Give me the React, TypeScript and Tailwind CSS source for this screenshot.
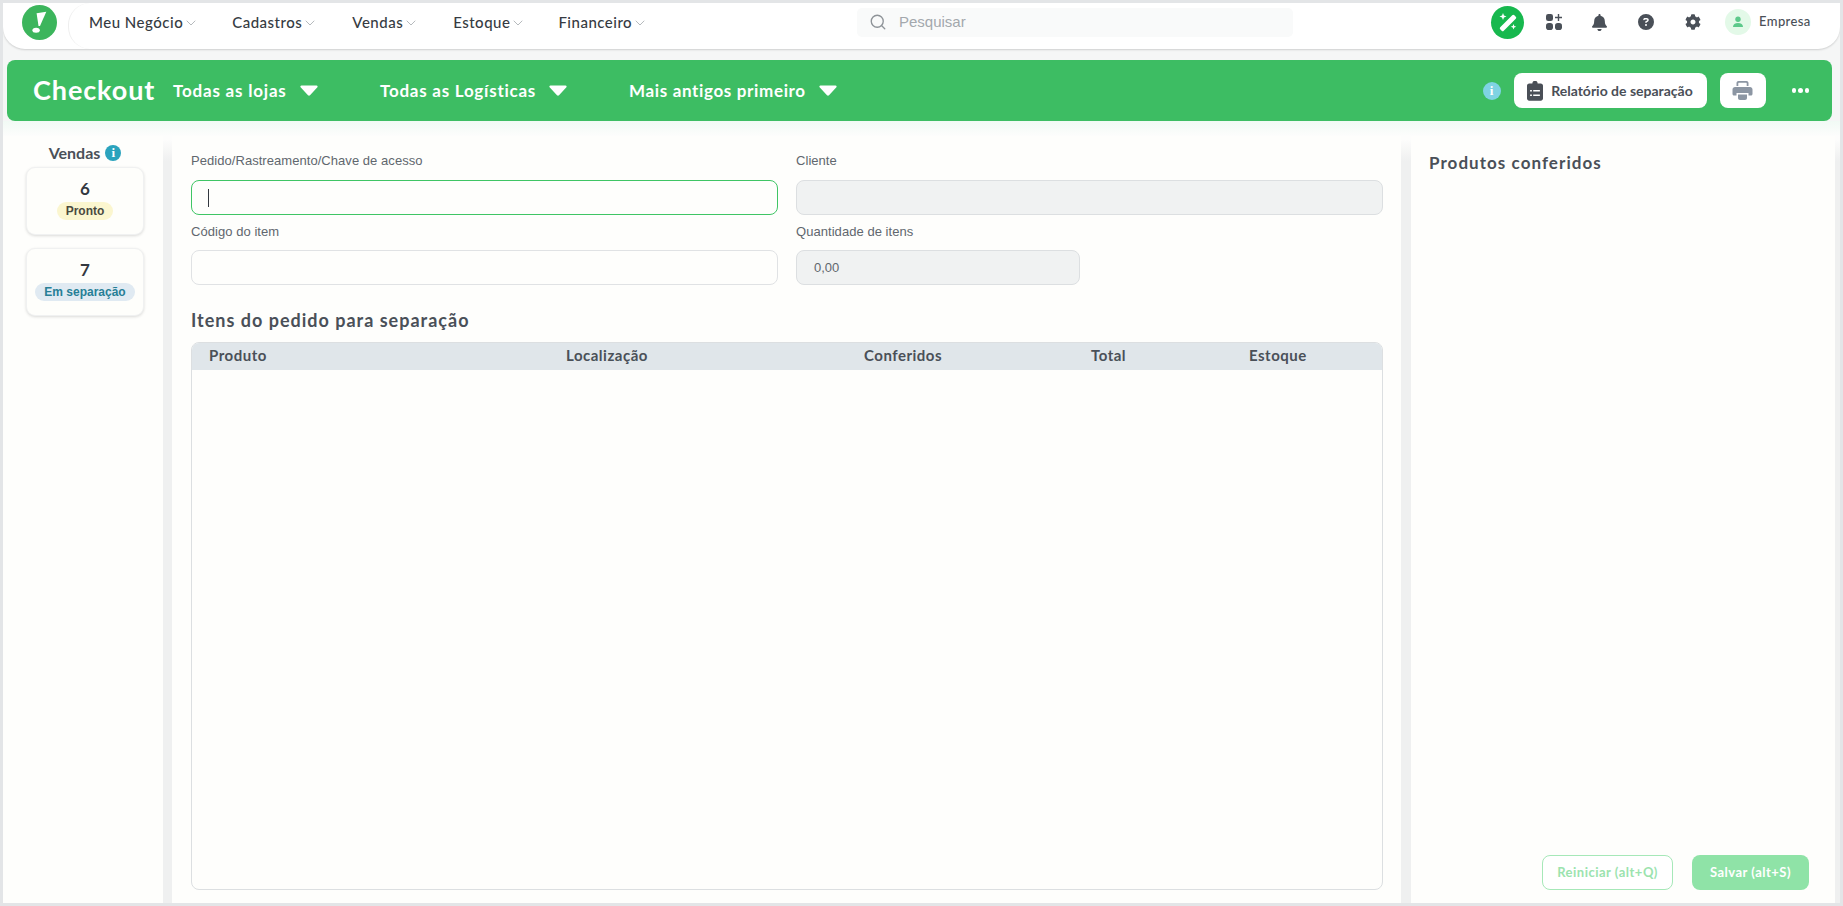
import { ChevronDown, Search } from "lucide-react";
import { FaBell, FaCog } from "react-icons/fa";
import { FaCircleQuestion } from "react-icons/fa6";

const NAV_ITEMS = [
  { label: "Meu Negócio", className: "ml-[20px]" },
  { label: "Cadastros", className: "ml-[33px]" },
  { label: "Vendas", className: "ml-[34px]" },
  { label: "Estoque", className: "ml-[34px]" },
  { label: "Financeiro", className: "ml-[32px]" },
];

const Caret = () => (
  <svg width="20" height="13" viewBox="0 0 20 13" className="shrink-0">
    <path
      d="M2.500 1.500h15c1 0 1.400 1 .9 1.700l-7.400 8c-.5.6-1.500.6-2 0l-7.400-8c-.5-.7-.1-1.700.9-1.700z"
      fill="white"
    />
  </svg>
);

const Logo = () => (
  <svg width="35" height="35" viewBox="0 0 36 36">
    <circle cx="18" cy="18" r="18" fill="#3cb55c" />
    <path d="M15 8.500l10 -1.500 -6.500 14.500 -1.500 .2z" fill="white" />
    <ellipse cx="14.500" cy="26" rx="3.800" ry="2.600" fill="white" />
  </svg>
);

const WandIcon = () => (
  <svg width="22" height="22" viewBox="0 0 22 22" fill="white">
    <rect x="8.500" y="2" width="5" height="20" rx="1.500" transform="rotate(45 11 12)" />
    <path d="M6 2l1 2.500 2.500 1-2.500 1-1 2.500-1-2.500-2.500-1 2.500-1z" />
    <path d="M16.500 13l.8 2 2 .8-2 .8-.8 2-.8-2-2-.8 2-.8z" />
  </svg>
);

const GridIcon = () => (
  <svg width="18" height="18" viewBox="0 0 18 18" fill="#4a5058">
    <rect x="1" y="1" width="7" height="7" rx="2.200" />
    <rect x="1" y="10" width="7" height="7" rx="2.800" />
    <rect x="10" y="10" width="7" height="7" rx="2.800" />
    <path d="M12.800 1h1.400v2.800H17v1.400h-2.800V8h-1.400V5.200H10V3.800h2.800z" />
  </svg>
);

const PersonIcon = () => (
  <svg width="12" height="12" viewBox="0 0 12 12" fill="#5cc98a">
    <circle cx="6" cy="3.200" r="2.700" />
    <path d="M1 11c0-2.600 2-4 5-4s5 1.400 5 4z" />
  </svg>
);

const ClipboardIcon = () => (
  <svg width="16" height="20" viewBox="0 0 18 22">
    <path
      d="M6 2.500a3 3 0 0 1 6 0h3.500c1.400 0 2.500 1.100 2.500 2.500v14.500c0 1.400-1.100 2.500-2.500 2.500h-13C1.100 22 0 20.900 0 19.500V5c0-1.400 1.100-2.500 2.500-2.500z"
      fill="#4a4f57"
    />
    <path d="M3.500 10h2v1.500h-2zM7 10h7.500v1.500H7zM3.500 15h2v1.500h-2zM7 15h7.500v1.500H7z" fill="white" />
  </svg>
);

const PrinterIcon = () => (
  <svg width="21" height="21" viewBox="0 0 21 21" fill="#8c96a3">
    <path d="M4.500 6V3c0-1.100.9-2 2-2h8c1.100 0 2 .9 2 2v3h-1.800V3.300c0-.3-.2-.5-.5-.5H6.800c-.3 0-.5.2-.5.500V6z" />
    <path d="M3 7h15c1.400 0 2.500 1.100 2.500 2.500V14c0 .8-.7 1.500-1.500 1.500h-2.500V13h-12v2.500H2c-.8 0-1.500-.7-1.500-1.500V9.500C.5 8.100 1.600 7 3 7z" />
    <path d="M6 14.500h9V18c0 1.100-.9 2-2 2H8c-1.100 0-2-.9-2-2z" />
  </svg>
);

const InfoDot = ({ className, size }: { className: string; size: string }) => (
  <span
    className={`inline-flex shrink-0 items-center justify-center rounded-full font-bold text-white ${className} ${size}`}
    style={{ fontFamily: "'Liberation Serif', serif" }}
  >
    i
  </span>
);

const StatusCard = ({
  count,
  label,
  pill,
  top,
}: {
  count: string;
  label: string;
  pill: string;
  top: string;
}) => (
  <div
    className={`ml-[23px] flex h-[68px] w-[118px] flex-col items-center rounded-[9px] border border-[#f0f1f1] bg-[#fefefb] shadow-[0_1px_3px_rgba(0,0,0,0.14)] ${top}`}
  >
    <div className="mt-[11px] text-[17px] leading-[20px] font-bold text-[#33383f]">{count}</div>
    <div
      className={`mt-[3px] flex h-[18px] items-center justify-center rounded-full px-[9px] text-[12px] font-semibold ${pill}`}
      style={{ fontFamily: "'Liberation Sans', sans-serif" }}
    >
      {label}
    </div>
  </div>
);

const FieldLabel = ({ children }: { children: string }) => (
  <div
    className="text-[13px] leading-[15px] tracking-[0.05px] text-[#61676e]"
    style={{ fontFamily: "'Liberation Sans', sans-serif" }}
  >
    {children}
  </div>
);

export default function App() {
  return (
    <div
      className="flex h-[906px] w-full flex-col overflow-hidden border-[3px] border-[#e3e5e7] bg-[#f5f6f6] text-[#33383f]"
      style={{ fontFamily: "Lato, sans-serif" }}
    >
      <header className="flex h-[46px] shrink-0 items-center rounded-b-[22px] bg-white shadow-[0_1px_2px_rgba(0,0,0,0.16)]">
        <div className="flex h-full w-[65px] shrink-0 items-center justify-center pb-[8px] pl-[8px]">
          <Logo />
        </div>
        <nav className="flex h-full w-[789px] shrink-0 items-center rounded-l-[22px] border-l border-[#eeeeee] pb-[8px]">
          {NAV_ITEMS.map((item) => (
            <div
              key={item.label}
              className={`flex items-center text-[15px] font-medium tracking-[0.5px] text-[#363b42] ${item.className}`}
            >
              {item.label}
              <ChevronDown size={16} strokeWidth={0.9} className="mt-[2px] text-[#858b91]" />
            </div>
          ))}
        </nav>
        <div className="mb-[8px] flex h-[29px] w-[436px] items-center rounded-[5px] bg-[#f9fafa] pl-[12px]">
          <Search size={18} strokeWidth={1.800} className="text-[#8e9398]" />
          <span className="ml-[12px] text-[15px] text-[#a3a8ad]" style={{ fontFamily: "'Liberation Sans', sans-serif" }}>
            Pesquisar
          </span>
        </div>
        <div className="flex h-full flex-1 items-center pb-[8px]">
          <div className="ml-[198px] flex h-[33px] w-[33px] items-center justify-center rounded-full bg-[#17b84e]">
            <WandIcon />
          </div>
          <div className="ml-[21px] flex w-[18px] justify-center">
            <GridIcon />
          </div>
          <div className="ml-[27px] flex w-[18px] justify-center">
            <FaBell size={17} color="#4a5058" />
          </div>
          <div className="ml-[29px] flex w-[18px] justify-center">
            <FaCircleQuestion size={16} color="#4a5058" />
          </div>
          <div className="ml-[29px] flex w-[18px] justify-center">
            <FaCog size={16} color="#4a5058" />
          </div>
          <div className="ml-[23px] flex h-[26px] w-[26px] items-center justify-center rounded-full bg-[#e3f9e8]">
            <PersonIcon />
          </div>
          <span className="ml-[8px] text-[13px] font-medium tracking-[0.4px] text-[#4a5058]">Empresa</span>
        </div>
      </header>

      <div className="mt-[11px] ml-[4px] flex h-[61px] w-[1825px] shrink-0 items-center rounded-[8px] bg-[#3dbd63] pl-[26px] text-white">
        <h1 className="mb-[2px] w-[140px] text-[27px] leading-none font-bold tracking-[0.9px]">Checkout</h1>
        <div className="flex w-[207px] items-center gap-[12px] text-[17px] font-bold tracking-[0.8px]">
          Todas as lojas <Caret />
        </div>
        <div className="flex w-[249px] items-center gap-[12px] text-[17px] font-bold tracking-[0.75px]">
          Todas as Logísticas <Caret />
        </div>
        <div className="flex items-center gap-[12px] text-[17px] font-bold tracking-[0.65px]">
          Mais antigos primeiro <Caret />
        </div>
        <div className="ml-auto flex items-center">
          <InfoDot className="bg-[#7fd3e3]" size="h-[18px] w-[18px] text-[13px]" />
          <button className="ml-[13px] flex h-[35px] w-[193px] items-center justify-center gap-[8px] rounded-[8px] bg-white text-[14px] font-bold text-[#4a4f57]">
            <ClipboardIcon />
            Relatório de separação
          </button>
          <button className="ml-[13px] flex h-[35px] w-[46px] items-center justify-center rounded-[8px] bg-white">
            <PrinterIcon />
          </button>
          <div className="mr-[23px] ml-[26px] flex gap-[2px]">
            <span className="h-[4.500px] w-[4.500px] rounded-full bg-white" />
            <span className="h-[4.500px] w-[4.500px] rounded-full bg-white" />
            <span className="h-[4.500px] w-[4.500px] rounded-full bg-white" />
          </div>
        </div>
      </div>

      <div className="flex min-h-0 flex-1 bg-[linear-gradient(180deg,#f1faf5_0,#fdfdfc_15px,#fdfdfc_18px,#eff0f0_40px)] pt-[15px]">
        <aside className="w-[160px] shrink-0 bg-[#fefefc]">
          <div className="mt-[7px] flex items-center justify-center gap-[5px] pl-[4px] text-[16px] leading-[19px] font-bold text-[#4a5058]">
            Vendas
            <InfoDot className="bg-[#2ba3bd]" size="h-[16px] w-[16px] text-[13px]" />
          </div>
          <StatusCard count="6" label="Pronto" pill="bg-[#fbf6cf] text-[#4a4a3f]" top="mt-[5px]" />
          <StatusCard count="7" label="Em separação" pill="bg-[#e0eaf2] text-[#277f96]" top="mt-[13px]" />
        </aside>

        <main className="ml-[9px] flex w-[1229px] shrink-0 flex-col bg-[#fefefc] pr-[18px] pb-[13px] pl-[19px]">
          <div className="grid grid-cols-[587px_1fr] gap-x-[18px]">
            <div>
              <div className="mt-[17px]">
                <FieldLabel>Pedido/Rastreamento/Chave de acesso</FieldLabel>
              </div>
              <div className="mt-[12px] flex h-[35px] items-center rounded-[8px] border border-[#3fc565] bg-[#fefefc] pl-[16px]">
                <span className="h-[18px] w-[1px] bg-[#33383f]" />
              </div>
            </div>
            <div>
              <div className="mt-[17px]">
                <FieldLabel>Cliente</FieldLabel>
              </div>
              <div className="mt-[12px] h-[35px] rounded-[8px] border border-[#dcdfe1] bg-[#f0f2f2]" />
            </div>
            <div>
              <div className="mt-[9px]">
                <FieldLabel>Código do item</FieldLabel>
              </div>
              <div className="mt-[11px] h-[35px] rounded-[8px] border border-[#e0e2e4] bg-[#fefefc]" />
            </div>
            <div>
              <div className="mt-[9px]">
                <FieldLabel>Quantidade de itens</FieldLabel>
              </div>
              <div
                className="mt-[11px] flex h-[35px] w-[284px] items-center rounded-[8px] border border-[#dcdfe1] bg-[#f0f2f2] pl-[17px] text-[13px] text-[#61676e]"
                style={{ fontFamily: "'Liberation Sans', sans-serif" }}
              >
                0,00
              </div>
            </div>
          </div>

          <h2 className="mt-[25px] text-[18px] leading-[20px] font-bold tracking-[1px] text-[#4a5058]">
            Itens do pedido para separação
          </h2>

          <div className="mt-[12px] min-h-0 flex-1 overflow-hidden rounded-[8px] border border-[#dcdfe1]">
            <div className="grid h-[27px] grid-cols-[357px_298px_227px_158px_1fr] items-center bg-[#e0e6ea] pb-[2px] pl-[17px] text-[15px] font-bold tracking-[0.5px] text-[#4a5058]">
              <span>Produto</span>
              <span>Localização</span>
              <span>Conferidos</span>
              <span>Total</span>
              <span>Estoque</span>
            </div>
          </div>
        </main>

        <section className="ml-[10px] flex w-[424px] shrink-0 flex-col justify-between bg-[#fefefc] pr-[26px] pb-[13px] pl-[18px]">
          <h2 className="mt-[17px] text-[17px] leading-[20px] font-bold tracking-[1.05px] text-[#4a5058]">
            Produtos conferidos
          </h2>
          <div className="flex justify-end gap-[19px]">
            <button className="h-[35px] w-[131px] rounded-[8px] border border-[#a6e8b8] bg-white text-[13px] font-bold tracking-[0.5px] text-[#9be3ae]">
              Reiniciar (alt+Q)
            </button>
            <button className="h-[35px] w-[117px] rounded-[8px] bg-[#8fe3a7] text-[13px] font-bold tracking-[0.5px] text-white">
              Salvar (alt+S)
            </button>
          </div>
        </section>
      </div>
    </div>
  );
}
